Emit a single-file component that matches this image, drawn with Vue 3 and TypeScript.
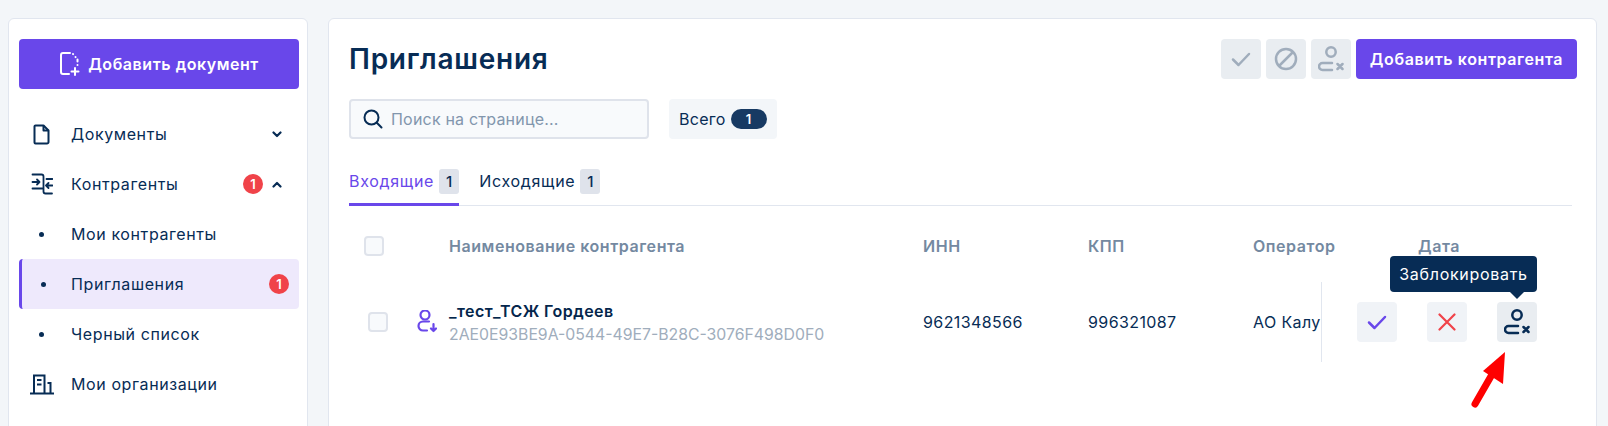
<script setup lang="ts">
interface NavItem { label: string; icon?: string; badge?: boolean; chevron?: 'up' | 'down'; active?: boolean }
const nav: NavItem[] = [
  { label: 'Документы', icon: 'doc', chevron: 'down' },
  { label: 'Контрагенты', icon: 'swap', badge: true, chevron: 'up' },
  { label: 'Мои контрагенты' },
  { label: 'Приглашения', badge: true, active: true },
  { label: 'Черный список' },
  { label: 'Мои организации', icon: 'org' },
]
const columns = ['Наименование контрагента', 'ИНН', 'КПП', 'Оператор', 'Дата']
</script>

<template>
  <div class="page">
    <aside class="card side">
      <button class="add-doc">
        <svg width="22" height="26" viewBox="0 0 22 26" fill="none" stroke="#fff" stroke-width="2" stroke-linecap="round" stroke-linejoin="round">
          <path d="M10 23H4a2 2 0 0 1-2-2V4a2 2 0 0 1 2-2h7" />
          <path d="M14 3l.1.1M16.500 6l.1.1M18.500 8.500v2M18.500 14v.1" />
          <path d="M16 17v7M12.500 20.500h7" />
        </svg>
        <span>Добавить документ</span>
      </button>
      <nav class="nav">
        <div v-for="item in nav" :key="item.label" class="nav-item" :class="{ active: item.active }">
          <span class="nav-icon">
            <svg v-if="item.icon === 'doc'" width="18" height="21" viewBox="0 0 18 21" fill="none" stroke="#072c55" stroke-width="2" stroke-linejoin="round">
              <path d="M2.500 1.500h8l5 5v11.500a1.500 1.500 0 0 1-1.500 1.500h-11.500a1 1 0 0 1-1-1v-16a1 1 0 0 1 1-1z" />
              <path d="M10.500 1.500v5h5" />
            </svg>
            <svg v-else-if="item.icon === 'swap'" width="22" height="22" viewBox="0 0 22 22" fill="none" stroke="#072c55" stroke-width="1.800" stroke-linecap="round" stroke-linejoin="round">
              <path d="M1.500 1.500h9a2 2 0 0 1 2 2v15a2 2 0 0 0 2 2h6.500" />
              <path d="M1.500 15.500h10M15.500 6h6" />
              <path d="M1.500 9h7M6 6.500 8.500 9 6 11.500" />
              <path d="M21.500 12.500H15M17.500 10 15 12.500l2.500 2.500" />
            </svg>
            <svg v-else-if="item.icon === 'org'" width="24" height="21" viewBox="0 0 24 21" fill="none" stroke="#072c55" stroke-width="2">
              <path d="M0 19.500h24" />
              <path d="M4 19.500V1.500h10.500v18" />
              <path d="M7 6h4.500M7 10.500h4.500" />
              <path d="M17.500 9h3v10" />
            </svg>
            <i v-else class="dot"></i>
          </span>
          <span class="nav-label">{{ item.label }}</span>
          <span v-if="item.badge" class="count">1</span>
          <svg v-if="item.chevron" class="chev" :class="{ up: item.chevron === 'up' }" width="10" height="7" viewBox="0 0 10 7" fill="none" stroke="#072c55" stroke-width="2.200" stroke-linecap="round" stroke-linejoin="round">
            <path d="M1.500 1.500 5 5l3.500-3.500" />
          </svg>
        </div>
      </nav>
    </aside>

    <main class="card content">
      <header class="head">
        <h1>Приглашения</h1>
        <div class="head-actions">
          <button class="ghost">
            <svg width="20" height="16" viewBox="0 0 20 16" fill="none" stroke="#a0adbc" stroke-width="2.500" stroke-linecap="round" stroke-linejoin="round"><path d="M2 8.500 7.500 14 18 3" /></svg>
          </button>
          <button class="ghost">
            <svg width="24" height="24" viewBox="0 0 24 24" fill="none" stroke="#a0adbc" stroke-width="2.500"><circle cx="12" cy="12" r="10" /><path d="M5 19 19 5" /></svg>
          </button>
          <button class="ghost">
            <svg width="26" height="26" viewBox="0 0 26 26" fill="none" stroke="#a0adbc" stroke-width="2.500" stroke-linecap="round"><circle cx="13" cy="6" r="4.700" /><path d="M14 17H4.500a3.500 3.500 0 0 0 0 7H14" /><path d="M19.500 18l5 5M24.500 18l-5 5" /></svg>
          </button>
          <button class="primary">Добавить контрагента</button>
        </div>
      </header>

      <div class="filters">
        <label class="search">
          <svg width="20" height="20" viewBox="0 0 20 20" fill="none" stroke="#072c55" stroke-width="2" stroke-linecap="round"><circle cx="8.500" cy="8.500" r="7" /><path d="m13.800 13.800 4.700 4.700" /></svg>
          <span>Поиск на странице...</span>
        </label>
        <div class="total">Всего <b>1</b></div>
      </div>

      <div class="tabs">
        <div class="tab on">Входящие <b>1</b></div>
        <div class="tab">Исходящие <b>1</b></div>
      </div>

      <div class="grid head-row">
        <span class="cb hcb"></span>
        <span class="th first">{{ columns[0] }}</span>
        <span class="th">{{ columns[1] }}</span>
        <span class="th">{{ columns[2] }}</span>
        <span class="th">{{ columns[3] }}</span>
        <span class="th">{{ columns[4] }}</span>
      </div>

      <div class="grid body-row">
        <span class="cb rcb"></span>
        <div class="name-cell">
          <svg class="in-icon" width="22" height="24" viewBox="0 0 22 24" fill="none" stroke="#6947ea" stroke-width="2.200" stroke-linecap="round" stroke-linejoin="round">
            <circle cx="10" cy="5" r="4.500" />
            <path d="M14 11.500H8a4.500 4.500 0 0 0 0 9h4" />
            <path d="M18.500 14v7M16 18.500l2.500 2.500 2.500-2.500" />
          </svg>
          <div class="name-text">
            <div class="name">_тест_ТСЖ Гордеев</div>
            <div class="uid">2AE0E93BE9A-0544-49E7-B28C-3076F498D0F0</div>
          </div>
        </div>
        <span class="td">9621348566</span>
        <span class="td">996321087</span>
        <span class="td clip">АО Калуга Астрал</span>
        <div class="row-actions">
          <button class="act">
            <svg width="20" height="16" viewBox="0 0 20 16" fill="none" stroke="#6947ea" stroke-width="2.500" stroke-linecap="round" stroke-linejoin="round"><path d="M2 8.500 7.500 14 18 3" /></svg>
          </button>
          <button class="act">
            <svg width="18" height="18" viewBox="0 0 18 18" fill="none" stroke="#f04349" stroke-width="2.200" stroke-linecap="round"><path d="M1.500 1.500l15 15M16.500 1.500l-15 15" /></svg>
          </button>
          <button class="act hover">
            <svg width="26" height="26" viewBox="0 0 26 26" fill="none" stroke="#072c55" stroke-width="2.500" stroke-linecap="round"><circle cx="13" cy="6" r="4.700" /><path d="M14 17H4.500a3.500 3.500 0 0 0 0 7H14" /><path d="M19.500 18l5 5M24.500 18l-5 5" /></svg>
            <span class="tip">Заблокировать</span>
          </button>
        </div>
      </div>
    </main>

    <svg class="arrow" width="44" height="60" viewBox="0 0 44 60" fill="none">
      <path d="M5 54 24 21" stroke="#fe0000" stroke-width="7" stroke-linecap="round" />
      <path d="M35 2 33 34 13 21z" fill="#fe0000" />
    </svg>
  </div>
</template>

<style>
html, body { margin: 0; overflow: hidden; }
</style>

<style scoped>
.page {
  position: relative;
  box-sizing: border-box;
  display: flex;
  gap: 20px;
  width: 1608px;
  height: 426px;
  padding: 18px 11px 0 8px;
  overflow: hidden;
  background: #f3f6f9;
  font-family: Inter, "Noto Sans", sans-serif;
  color: #072c55;
}
.card {
  box-sizing: border-box;
  height: 440px;
  background: #fff;
  border: 1px solid #e1e6ef;
  border-radius: 6px;
}
.side { flex: none; width: 300px; padding: 20px 8px 0 10px; }
button { font-family: inherit; border: 0; padding: 0; cursor: pointer; }
.add-doc {
  display: flex;
  align-items: center;
  justify-content: center;
  gap: 7px;
  width: 280px;
  height: 50px;
  background: #6947ea;
  color: #fff;
  border-radius: 4px;
  font-size: 16px;
  font-weight: 600;
  letter-spacing: 0.55px;
}
.nav { margin-top: 20px; }
.nav-item {
  box-sizing: border-box;
  display: flex;
  align-items: center;
  width: 280px;
  height: 50px;
  border-radius: 4px;
  font-size: 16px;
  letter-spacing: 0.6px;
}
.nav-item.active {
  background: #eee9fc;
  border-left: 3px solid #6947ea;
}
.nav-icon { flex: none; display: flex; justify-content: center; width: 45px; margin-right: 7px; }
.active .nav-icon { width: 42px; }
.dot { width: 5px; height: 5px; border-radius: 50%; background: #072c55; }
.nav-label { flex: 1; padding-bottom: 1px; }
.count {
  display: flex;
  align-items: center;
  justify-content: center;
  width: 20px;
  height: 20px;
  border-radius: 50%;
  background: #f04349;
  color: #fff;
  font-size: 13px;
  font-weight: 600;
  letter-spacing: 0;
  margin-right: 10px;
}
.chev { margin-right: 17px; margin-left: -1px; }
.chev.up { transform: rotate(180deg); }

.content { flex: 1; min-width: 0; padding: 20px 19px 0 20px; }
.head { display: flex; justify-content: space-between; align-items: center; height: 40px; }
h1 { margin: 0; font-size: 28px; font-weight: 600; letter-spacing: 0.75px; }
.head-actions { display: flex; gap: 5px; }
.ghost {
  display: flex;
  align-items: center;
  justify-content: center;
  width: 40px;
  height: 40px;
  border-radius: 4px;
  background: #e9edf1;
}
.primary {
  width: 221px;
  height: 40px;
  border-radius: 4px;
  background: #6947ea;
  color: #fff;
  font-size: 16px;
  font-weight: 600;
  letter-spacing: 0.6px;
}
.filters { display: flex; gap: 20px; margin-top: 20px; }
.search {
  box-sizing: border-box;
  display: flex;
  align-items: center;
  gap: 8px;
  width: 300px;
  height: 40px;
  padding-left: 12px;
  background: #f8fafc;
  border: 2px solid #dfe3eb;
  border-radius: 4px;
  color: #8296ad;
  font-size: 16px;
  letter-spacing: 0.2px;
}
.total {
  display: flex;
  align-items: center;
  gap: 5px;
  box-sizing: border-box;
  width: 108px;
  padding: 0 10px;
  height: 40px;
  background: #f3f6f9;
  border-radius: 4px;
  font-size: 16px;
  letter-spacing: 0.3px;
}
.total b {
  width: 36px;
  height: 20px;
  display: flex;
  align-items: center;
  justify-content: center;
  border-radius: 10px;
  background: #173a63;
  color: #fff;
  font-size: 13px;
  font-weight: 600;
}
.tabs { display: flex; gap: 20px; margin-top: 20px; height: 46px; border-bottom: 1px solid #e1e6ef; box-sizing: content-box; width: 1223px; }
.tab {
  display: flex;
  align-items: flex-start;
  gap: 5px;
  height: 46px;
  padding-top: 10px;
  box-sizing: border-box;
  font-size: 16px;
  line-height: 25px;
  letter-spacing: 0.7px;
}
.tab b {
  width: 20px;
  height: 25px;
  display: flex;
  align-items: center;
  justify-content: center;
  border-radius: 3px;
  background: #dfe3eb;
  font-size: 15px;
  font-weight: 500;
  letter-spacing: 0;
}
.tab.on { color: #6947ea; border-bottom: 3px solid #6947ea; height: 47px; }
.tab.on b { color: #072c55; }
.grid {
  display: grid;
  grid-template-columns: 100px 474px 165px 165px 68px 1fr;
  width: 1223px;
  align-items: center;
}
.head-row { margin-top: 20px; height: 40px; grid-template-columns: 100px 474px 165px 165px 165px 1fr; }
.th { font-size: 16px; font-weight: 600; color: #7489a1; letter-spacing: 0.55px; white-space: nowrap; }
.cb {
  box-sizing: border-box;
  display: block;
  width: 20px;
  height: 20px;
  border: 2px solid #dfe3eb;
  border-radius: 4px;
  background: #f8fafc;
}
.hcb { margin-left: 15px; }
.rcb { margin-left: 19px; }
.body-row { margin-top: 16px; height: 80px; }
.name-cell { display: flex; align-items: center; gap: 12px; margin-left: -34px; }
.in-icon { flex: none; }
.name-text { padding-top: 3px; }
.name { font-size: 16px; font-weight: 600; line-height: 23px; color: #04264c; letter-spacing: 0.45px; white-space: nowrap; }
.uid { font-size: 15.800px; line-height: 24px; color: #a0adbc; white-space: nowrap; }
.td { font-size: 16px; letter-spacing: 0.4px; color: #072c55; white-space: nowrap; }
.clip { overflow: hidden; }
.row-actions {
  box-sizing: border-box;
  display: flex;
  gap: 30px;
  align-items: center;
  height: 80px;
  padding-left: 35px;
  border-left: 1px solid #e1e6ef;
}
.act {
  position: relative;
  flex: none;
  display: flex;
  align-items: center;
  justify-content: center;
  width: 40px;
  height: 40px;
  border-radius: 4px;
  background: #f0f3f7;
}
.act.hover { background: #e9edf1; }
.tip {
  position: absolute;
  right: 0;
  bottom: 50px;
  box-sizing: border-box;
  width: 147px;
  height: 36px;
  line-height: 36px;
  text-align: center;
  background: #072c55;
  color: #fff;
  border-radius: 4px;
  font-size: 16px;
  letter-spacing: 0.7px;
  white-space: nowrap;
}
.tip::after {
  content: "";
  position: absolute;
  right: 13px;
  bottom: -7px;
  width: 0;
  height: 0;
  border: 7px solid transparent;
  border-bottom: 0;
  border-top-color: #072c55;
}
.arrow { position: absolute; left: 1470px; top: 350px; }
</style>
